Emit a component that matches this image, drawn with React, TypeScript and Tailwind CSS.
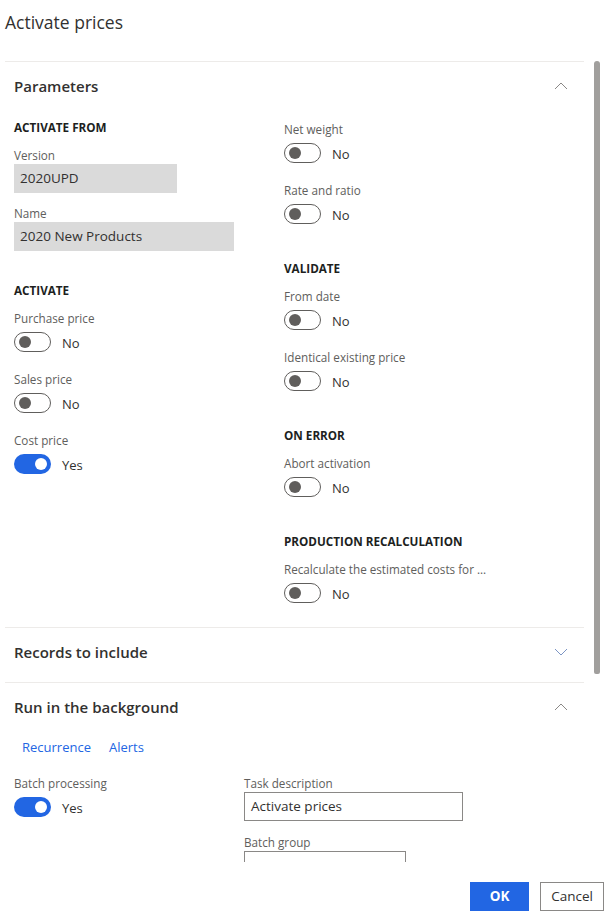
import React from 'react';

const font = { fontFamily: '"Open Sans", "Noto Sans", sans-serif' };

const Chevron: React.FC<{ up?: boolean; blue?: boolean }> = ({ up, blue }) => (
  <svg width="14" height="8" viewBox="0 0 14 8" fill="none" className={blue ? 'text-[#7c95c4]' : 'text-[#8a8886]'}>
    <path d={up ? 'M1 7 L7 1 L13 7' : 'M1 1 L7 7 L13 1'} stroke="currentColor" strokeWidth="1" />
  </svg>
);

const Toggle: React.FC<{ on?: boolean }> = ({ on }) => (
  <div className="flex items-center h-5 mt-[6px]">
    {on ? (
      <div className="w-[37px] h-5 rounded-full bg-[#2266e3] flex items-center justify-end pr-[4px]">
        <div className="w-3 h-3 rounded-full bg-white" />
      </div>
    ) : (
      <div className="w-[37px] h-5 rounded-full border border-[#605e5c] flex items-center pl-[4px]">
        <div className="w-3 h-3 rounded-full bg-[#605e5c]" />
      </div>
    )}
    <span className="ml-[11px] mt-[4px] text-[13px] text-[#323130]">{on ? 'Yes' : 'No'}</span>
  </div>
);

const ToggleField: React.FC<{ label: string; on?: boolean; last?: boolean }> = ({ label, on, last }) => (
  <div className={last ? '' : 'mb-[19px]'}>
    <div className="h-4 leading-4 text-[11.7px] text-[#605e5c] whitespace-nowrap">{label}</div>
    <Toggle on={on} />
  </div>
);

const GroupTitle: React.FC<{ children: React.ReactNode; gap?: string }> = ({ children, gap = 'mt-[17px]' }) => (
  <div className={`h-4 leading-4 text-[11.7px] font-bold text-[#201f1e] mb-[12px] ${gap}`}>
    {children}
  </div>
);

const ReadOnlyInput: React.FC<{ label: string; value: string; width: string }> = ({ label, value, width }) => (
  <div className="mb-[12px]">
    <div className="h-4 leading-4 text-[11.7px] text-[#605e5c]">{label}</div>
    <div className={`${width} h-[29px] mt-[1px] bg-[#dadada] flex items-center px-[6px] text-[13.5px] text-[#323130]`}>
      {value}
    </div>
  </div>
);

const SectionHeader: React.FC<{ title: string; up?: boolean; blue?: boolean }> = ({ title, up, blue }) => (
  <div className="h-[48px] flex items-center justify-between pl-[9px] pr-[16px]">
    <span className="text-[15px] font-semibold text-[#323130]">{title}</span>
    <Chevron up={up} blue={blue} />
  </div>
);

export default function App() {
  return (
    <div className="w-[613px] h-[923px] bg-white flex flex-col overflow-hidden" style={font}>
      {/* Title */}
      <div className="h-[61px] shrink-0 flex items-start pt-[8px] pl-[5px]">
        <h1 className="text-[17.5px] text-[#323130] leading-7">Activate prices</h1>
      </div>

      {/* Scrollable body */}
      <div className="relative h-[801px] shrink-0 overflow-hidden">
        <div className="w-[579px] ml-[5px]">
          {/* Parameters */}
          <div className="border-t border-[#edebe9]">
            <SectionHeader title="Parameters" up />
            <div className="grid grid-cols-[270px_1fr] pl-[9px] pt-[9px] pb-[24px]">
              <div className="flex flex-col">
                <GroupTitle gap="">ACTIVATE FROM</GroupTitle>
                <ReadOnlyInput label="Version" value="2020UPD" width="w-[163px]" />
                <ReadOnlyInput label="Name" value="2020 New Products" width="w-[220px]" />
                <GroupTitle gap="mt-[19px]">ACTIVATE</GroupTitle>
                <ToggleField label="Purchase price" />
                <ToggleField label="Sales price" />
                <ToggleField label="Cost price" on last />
              </div>
              <div className="flex flex-col pt-[2px]">
                <ToggleField label="Net weight" />
                <ToggleField label="Rate and ratio" />
                <GroupTitle>VALIDATE</GroupTitle>
                <ToggleField label="From date" />
                <ToggleField label="Identical existing price" />
                <GroupTitle>ON ERROR</GroupTitle>
                <ToggleField label="Abort activation" />
                <GroupTitle>PRODUCTION RECALCULATION</GroupTitle>
                <ToggleField label="Recalculate the estimated costs for ..." last />
              </div>
            </div>
          </div>

          {/* Records to include */}
          <div className="border-t border-[#edebe9] pb-[6px]">
            <SectionHeader title="Records to include" blue />
          </div>

          {/* Run in the background */}
          <div className="border-t border-[#edebe9]">
            <SectionHeader title="Run in the background" up />
            <div className="flex pl-[9px] mt-[8px] text-[13px] text-[#2266e3] leading-4">
              <span className="px-2">Recurrence</span>
              <span className="px-2 ml-[2px]">Alerts</span>
            </div>
            <div className="grid grid-cols-[230px_1fr] pl-[9px] mt-[20px]">
              <div>
                <div className="h-4 leading-4 text-[11.7px] text-[#605e5c]">Batch processing</div>
                <Toggle on />
              </div>
              <div>
                <div className="h-4 leading-4 text-[11.7px] text-[#605e5c]">Task description</div>
                <div className="w-[219px] h-[29px] mt-[1px] border border-[#8a8886] flex items-center px-[6px] text-[13.5px] text-[#323130]">
                  Activate prices
                </div>
                <div className="h-4 leading-4 text-[11.7px] text-[#605e5c] mt-[13px]">Batch group</div>
                <div className="w-[162px] h-[29px] mt-[1px] border border-[#8a8886]" />
              </div>
            </div>
          </div>
        </div>

        {/* Scrollbar thumb */}
        <div className="absolute left-[594px] top-0 w-[6px] h-[613px] rounded-t-[3px] rounded-b-[2px] bg-[#a19f9d]" />
      </div>

      {/* Footer */}
      <div className="flex-1 flex justify-end items-start pt-[20px] pr-[9px] gap-[11px]">
        <button className="w-[59px] h-[29px] bg-[#2266e3] text-white text-[13.5px] font-bold">OK</button>
        <button className="w-[64px] h-[29px] border border-[#8a8886] bg-white text-[13.5px] text-[#323130]">Cancel</button>
      </div>
    </div>
  );
}
